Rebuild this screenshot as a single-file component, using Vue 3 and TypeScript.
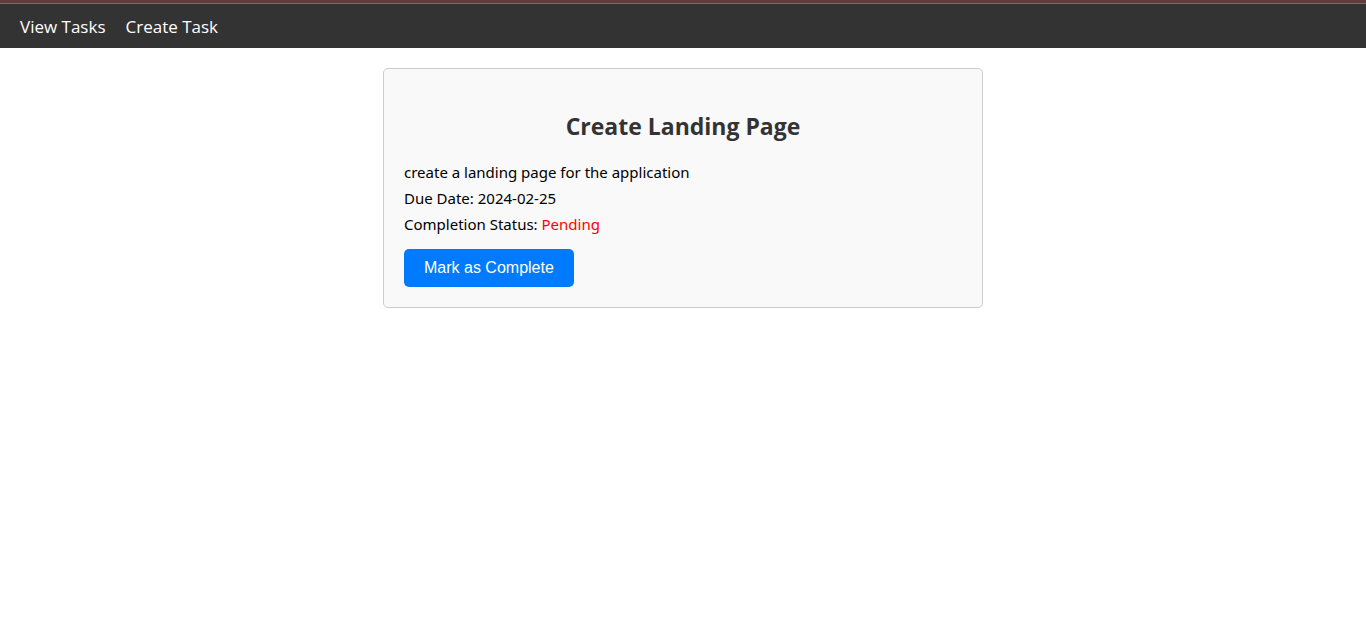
<script setup lang="ts">
import { computed, ref } from 'vue'

interface Task {
  title: string
  description: string
  dueDate: string
  completed: boolean
}

const task = ref<Task>({
  title: 'Create Landing Page',
  description: 'create a landing page for the application',
  dueDate: '2024-02-25',
  completed: false,
})

const status = computed(() => (task.value.completed ? 'Completed' : 'Pending'))
</script>

<template>
  <nav class="navbar">
    <a href="#tasks">View Tasks</a>
    <a href="#create">Create Task</a>
  </nav>
  <main class="card">
    <h2>{{ task.title }}</h2>
    <p>{{ task.description }}</p>
    <p>Due Date: {{ task.dueDate }}</p>
    <p>
      Completion Status:
      <span :class="task.completed ? 'done' : 'pending'">{{ status }}</span>
    </p>
    <button v-if="!task.completed" type="button" @click="task.completed = true">
      Mark as Complete
    </button>
  </main>
</template>

<style>
body {
  margin: 0;
  background: #fff;
  font-family: "Segoe UI", "Open Sans", "Noto Sans", sans-serif;
}
</style>

<style scoped>
.navbar {
  display: flex;
  gap: 20px;
  padding: 11px 20px 9px;
  border-top: 3px solid #623c3c;
  box-shadow: inset 0 1px #7e6a6a;
  background: #333;
}

.navbar a {
  color: #fff;
  font-size: 17px;
  font-weight: 390;
  line-height: 25px;
  text-decoration: none;
}

.card {
  box-sizing: border-box;
  max-width: 600px;
  margin: 20px auto;
  padding: 20px;
  border: 1px solid #ccc;
  border-radius: 5px;
  background: #f9f9f9;
}

h2 {
  margin: 19px 0 15px;
  color: #333;
  font-size: 23px;
  line-height: 36px;
  text-align: center;
}

p {
  margin: 0;
  color: #000;
  font-family: "Segoe UI", "Noto Sans", sans-serif;
  font-size: 15px;
  line-height: 26px;
}

.pending {
  color: #f00;
}

.done {
  color: #008000;
}

button {
  display: block;
  margin-top: 12px;
  padding: 10px 20px;
  border: 0;
  border-radius: 5px;
  background: #007bff;
  color: #fff;
  font-family: "Liberation Sans", Arial, sans-serif;
  font-size: 16px;
  line-height: 18px;
  cursor: pointer;
}
</style>
